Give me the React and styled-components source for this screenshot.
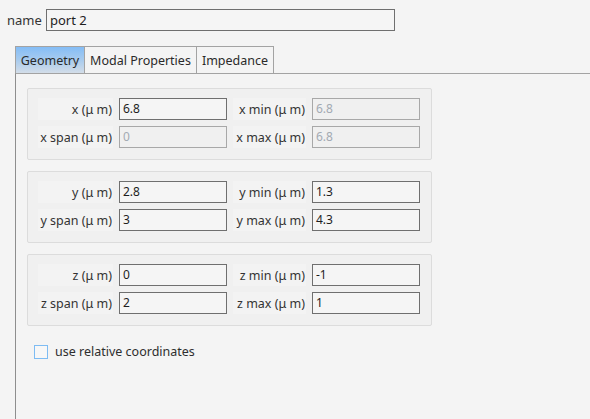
import React from "react";
import styled, { createGlobalStyle } from "styled-components";

const Global = createGlobalStyle`
  html, body { margin: 0; padding: 0; background: #f4f4f4; }
  body { font-family: "Noto Sans", "Open Sans", sans-serif; font-size: 12px; color: #2e2e2e; }
  #root { width: 590px; height: 419px; overflow: hidden; }
`;

const Page = styled.div`
  width: 590px;
  height: 419px;
  background: #f4f4f4;
  display: flex;
  flex-direction: column;
  overflow: hidden;
`;

const NameRow = styled.div`
  display: flex;
  align-items: center;
  gap: 6px;
  padding: 9px 0 0 7px;
  height: 22px;
`;

const NameLabel = styled.span`
  font-size: 13px;
  color: #333;
  width: 33px;
`;

const TextInput = styled.div`
  box-sizing: border-box;
  width: ${(p) => p.$w}px;
  height: 22px;
  border: 1px solid ${(p) => (p.$disabled ? "#a8a8a8" : "#6f6f6f")};
  background: ${(p) => (p.$disabled ? "#f0f0f0" : "#f5f5f5")};
  color: ${(p) => (p.$disabled ? "#a3aab3" : "#1e1e1e")};
  font-size: ${(p) => p.$fs || 12}px;
  line-height: 20px;
  padding-left: 3px;
  white-space: nowrap;
`;

const TabBar = styled.div`
  display: flex;
  margin: 15px 0 0 15px;
  height: 27px;
`;

const Tab = styled.div`
  box-sizing: border-box;
  width: ${(p) => p.$w}px;
  height: 27px;
  border: 1px solid #a3a3a3;
  border-left-width: ${(p) => (p.$first ? 1 : 0)}px;
  border-bottom: none;
  background: ${(p) =>
    p.$active ? "linear-gradient(to bottom, #84bdf6 0%, #a8cbee 50%, #d3dde8 100%)" : "#f4f4f4"};
  font-size: 12.5px;
  color: #2a2a2a;
  display: flex;
  align-items: center;
  justify-content: center;
  padding-top: 1px;
`;

const Pane = styled.div`
  flex: 1;
  margin-left: 15px;
  border-left: 1px solid #8e8e8e;
  border-top: 1px solid #a3a3a3;
  padding: 14px 0 0 11px;
  display: flex;
  flex-direction: column;
  gap: 11px;
`;

const Group = styled.div`
  box-sizing: border-box;
  width: 405px;
  height: 72px;
  background: #f0f0f0;
  border: 1px solid #dcdcdc;
  border-radius: 2px;
  padding: 9px 11px 0 10px;
  display: grid;
  grid-template-columns: 75px 108px 73px 108px;
  grid-auto-rows: 22px;
  column-gap: 6px;
  row-gap: 6px;
  align-items: center;
`;

const FieldLabel = styled.div`
  height: 22px;
  background: #f3f3f3;
  display: flex;
  align-items: center;
  justify-content: flex-end;
  padding-right: 1px;
  font-size: 12.5px;
  color: #333;
  white-space: nowrap;
`;

const CheckRow = styled.div`
  display: flex;
  align-items: center;
  gap: 7px;
  margin: 6px 0 0 7px;
  font-size: 12.5px;
  color: #2e2e2e;
`;

const Box = styled.div`
  box-sizing: border-box;
  width: 14px;
  height: 14px;
  border: 1px solid #7ebcf3;
  background: #f7f7f7;
`;

const groups = [
  [
    ["x", "6.8", false, "x min", "6.8", true],
    ["x span", "0", true, "x max", "6.8", true],
  ],
  [
    ["y", "2.8", false, "y min", "1.3", false],
    ["y span", "3", false, "y max", "4.3", false],
  ],
  [
    ["z", "0", false, "z min", "-1", false],
    ["z span", "2", false, "z max", "1", false],
  ],
];

export default function App() {
  return (
    <Page>
      <Global />
      <NameRow>
        <NameLabel>name</NameLabel>
        <TextInput $w={349} $fs={13}>port 2</TextInput>
      </NameRow>
      <TabBar>
        <Tab $w={70} $first $active>Geometry</Tab>
        <Tab $w={112}>Modal Properties</Tab>
        <Tab $w={77}>Impedance</Tab>
      </TabBar>
      <Pane>
        {groups.map((rows, gi) => (
          <Group key={gi}>
            {rows.map((r, ri) => (
              <React.Fragment key={ri}>
                <FieldLabel>{r[0]} (μ m)</FieldLabel>
                <TextInput $w={108} $disabled={r[2]}>{r[1]}</TextInput>
                <FieldLabel>{r[3]} (μ m)</FieldLabel>
                <TextInput $w={108} $disabled={r[5]}>{r[4]}</TextInput>
              </React.Fragment>
            ))}
          </Group>
        ))}
        <CheckRow>
          <Box />
          <span>use relative coordinates</span>
        </CheckRow>
      </Pane>
    </Page>
  );
}
